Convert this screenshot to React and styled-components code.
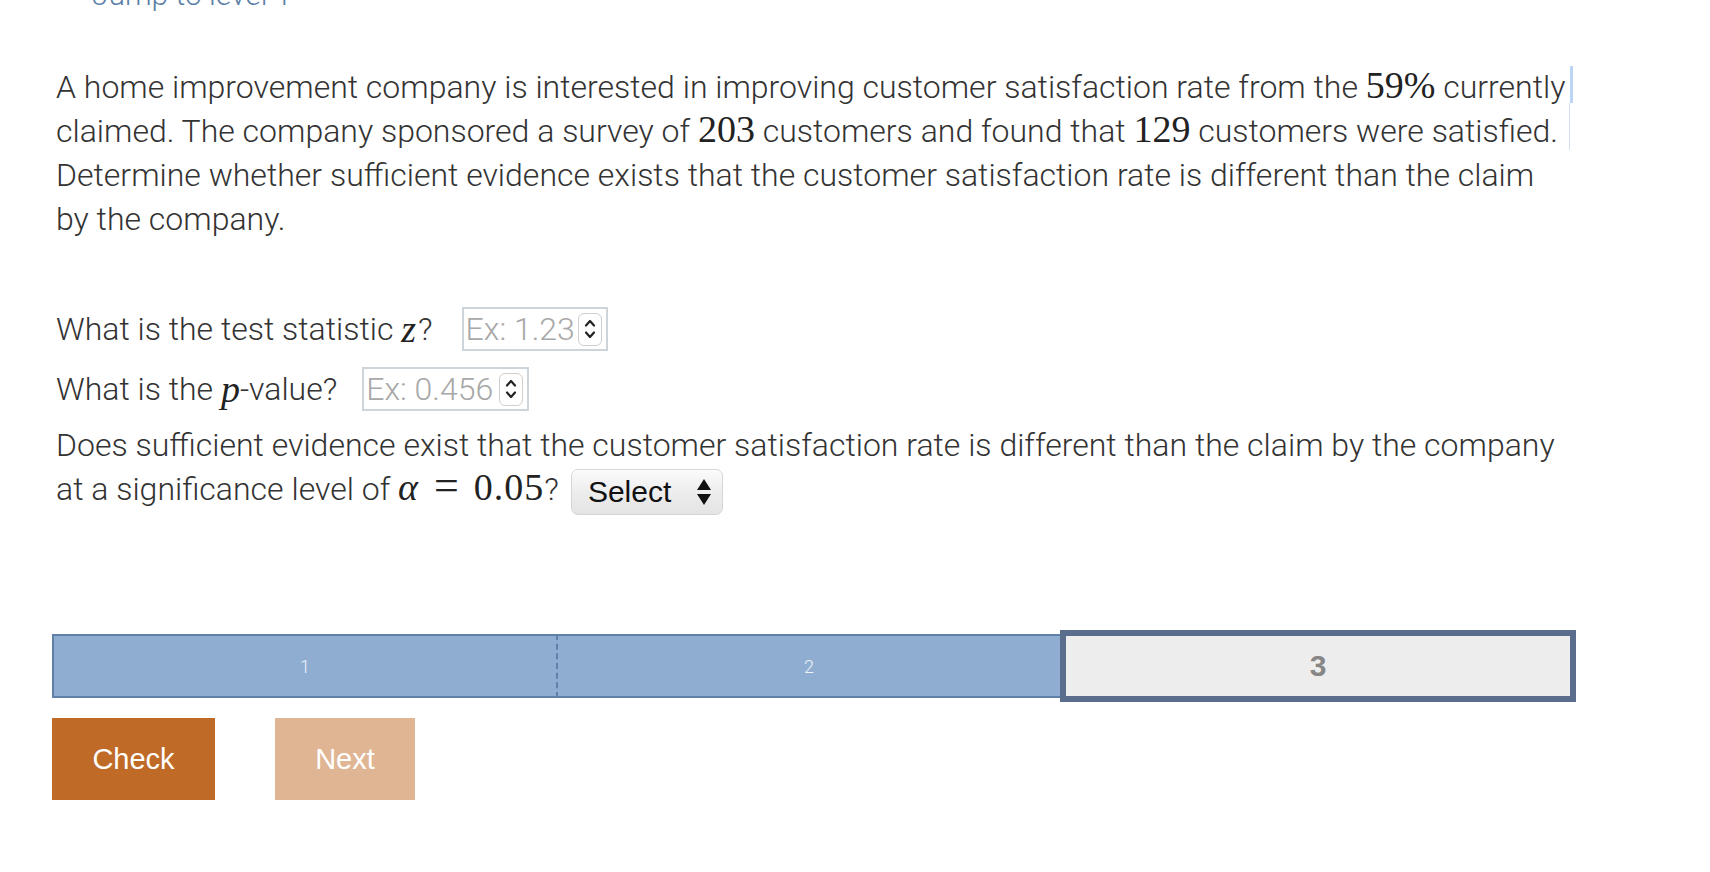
import React from "react";
import styled, { createGlobalStyle } from "styled-components";

const GlobalStyle = createGlobalStyle`
  body {
    margin: 0;
    background: #ffffff;
    font-family: Roboto, "Liberation Sans", sans-serif;
    overflow: hidden;
  }
`;

const Page = styled.div`
  width: 1524px;
  padding-left: 52px;
  color: #333333;
`;

const TopLink = styled.a`
  display: block;
  margin-top: -21px;
  padding-left: 40px;
  height: 32px;
  line-height: 32px;
  font-size: 30px;
  font-weight: 300;
  color: #5b7fa8;
  text-decoration: none;
`;

const Problem = styled.p`
  position: relative;
  margin: 54px 0 0;
  padding-left: 4px;
  font-size: 32px;
  font-weight: 300;
  line-height: 44px;
  white-space: nowrap;

  &::after {
    content: "";
    position: absolute;
    left: 1518px;
    top: 1px;
    width: 3px;
    height: 37px;
    background: #bcd5f5;
  }
  &::before {
    content: "";
    position: absolute;
    left: 1517px;
    top: 38px;
    width: 1px;
    height: 47px;
    background: #cfe0f7;
  }
`;

const Num = styled.span`
  font-family: "Liberation Serif", "DejaVu Serif", serif;
  font-size: ${(p) => p.$size || 38}px;
  letter-spacing: ${(p) => (p.$spaced ? "1px" : "0")};
  font-weight: 400;
  line-height: 0;
  color: #222;
`;

const Var = styled.span`
  font-family: "Liberation Serif", "DejaVu Serif", serif;
  font-style: italic;
  font-size: 38px;
  font-weight: 400;
  line-height: 0;
  color: #222;
  padding-right: ${(p) => (p.$pad ? "2px" : "0")};
`;

const Eq = styled.span`
  margin: 0 15px 0 16px;
`;

const Questions = styled.div`
  margin-top: 66px;
  padding-left: 4px;
  display: flex;
  flex-direction: column;
  gap: 16px;
`;

const Row = styled.div`
  display: flex;
  align-items: center;
  height: 44px;
  font-size: 32px;
  font-weight: 300;
  white-space: nowrap;
`;

const InputBox = styled.div`
  display: flex;
  align-items: center;
  justify-content: space-between;
  box-sizing: border-box;
  width: ${(p) => p.$w}px;
  height: 44px;
  margin-left: ${(p) => p.$gap}px;
  padding: 0 4px 0 2px;
  border: 2px solid #cdd5db;
  color: #a8a8a8;
  font-size: 32px;
  font-weight: 300;
  overflow: hidden;
`;

const Spinner = styled.span`
  display: flex;
  flex-direction: column;
  align-items: center;
  justify-content: center;
  flex: 0 0 24px;
  box-sizing: border-box;
  width: 24px;
  height: 33px;
  border: 1px solid #cfcfcf;
  border-radius: 6px;
  background: #ffffff;
  gap: 4px;
`;

const Question = styled.p`
  margin: 12px 0 0;
  padding-left: 4px;
  font-size: 32px;
  font-weight: 300;
  line-height: 44px;
  white-space: nowrap;
`;

const Select = styled.span`
  display: inline-flex;
  align-items: center;
  justify-content: space-between;
  box-sizing: border-box;
  vertical-align: middle;
  width: 152px;
  height: 46px;
  margin: -4px 0 -4px 12px;
  padding: 0 10px 0 16px;
  border: 1px solid #d6d6d6;
  border-radius: 7px;
  background: linear-gradient(#fbfbfb, #ececec 55%, #e4e4e4);
  box-shadow: inset 0 1px 0 #ffffff;
  font-family: "Liberation Sans", Arial, sans-serif;
  font-size: 30px;
  font-weight: 400;
  line-height: 1;
  color: #111;
`;

const Track = styled.div`
  display: flex;
  height: 64px;
  margin-top: 123px;
`;

const DoneSeg = styled.div`
  flex: 1;
  display: flex;
  align-items: center;
  justify-content: center;
  background: #8fadd0;
  border-top: 2px solid #5f80a8;
  border-bottom: 2px solid #5f80a8;
  border-left: ${(p) => (p.$first ? "2px solid #5f80a8" : "none")};
  border-right: ${(p) => (p.$first ? "2px dashed #5f80a8" : "none")};
  color: #eef3f9;
  font-size: 18px;
  font-weight: 300;
`;

const CurrentSeg = styled.div`
  flex: 0 0 516px;
  box-sizing: border-box;
  margin: -4px 0;
  display: flex;
  align-items: center;
  justify-content: center;
  background: #ededed;
  border: 6px solid #5a6d8c;
  color: #878787;
  font-family: "Liberation Sans", Arial, sans-serif;
  font-size: 30px;
  font-weight: 700;
`;

const Buttons = styled.div`
  display: flex;
  gap: 60px;
  margin-top: 20px;
`;

const Button = styled.button`
  width: ${(p) => p.$w}px;
  height: 82px;
  border: none;
  padding: 0;
  background: ${(p) => (p.$muted ? "#e0b594" : "#c06a27")};
  color: #ffffff;
  font-family: "Liberation Sans", Arial, sans-serif;
  font-size: 29px;
  cursor: pointer;
`;

const Chevron = ({ up }) => (
  <svg width="12" height="8" viewBox="0 0 12 8">
    <path
      d={up ? "M2 6.5 L6 2 L10 6.5" : "M2 1.5 L6 6 L10 1.5"}
      fill="none"
      stroke="#222"
      strokeWidth="2.2"
      strokeLinecap="round"
      strokeLinejoin="round"
    />
  </svg>
);

const SelectArrows = () => (
  <svg width="16" height="28" viewBox="0 0 16 28">
    <path d="M8 1 L15 12 L1 12 Z" fill="#111" />
    <path d="M1 16 L15 16 L8 27 Z" fill="#111" />
  </svg>
);

const NumberInput = ({ placeholder, w, gap }) => (
  <InputBox $w={w} $gap={gap}>
    <span>{placeholder}</span>
    <Spinner>
      <Chevron up />
      <Chevron />
    </Spinner>
  </InputBox>
);

export default function App() {
  return (
    <>
      <GlobalStyle />
      <Page>
        <TopLink href="#">Jump to level 1</TopLink>
        <Problem>
          A home improvement company is interested in improving customer satisfaction rate from the <Num>59%</Num> currently
          <br />
          claimed. The company sponsored a survey of <Num>203</Num> customers and found that <Num>129</Num> customers were satisfied.
          <br />
          Determine whether sufficient evidence exists that the customer satisfaction rate is different than the claim
          <br />
          by the company.
        </Problem>
        <Questions>
          <Row>
            What is the test statistic&nbsp;<Var $pad>z</Var>?
            <NumberInput placeholder="Ex: 1.23" w={146} gap={29} />
          </Row>
          <Row>
            What is the&nbsp;<Var>p</Var>-value?
            <NumberInput placeholder="Ex: 0.456" w={167} gap={25} />
          </Row>
        </Questions>
        <Question>
          Does sufficient evidence exist that the customer satisfaction rate is different than the claim by the company
          <br />
          at a significance level of <Var>α</Var>
          <Eq>
            <Num $size={44}>=</Num>
          </Eq>
          <Num $spaced>0.05</Num>?
          <Select>
            Select
            <SelectArrows />
          </Select>
        </Question>
        <Track>
          <DoneSeg $first>1</DoneSeg>
          <DoneSeg>2</DoneSeg>
          <CurrentSeg>3</CurrentSeg>
        </Track>
        <Buttons>
          <Button $w={163}>Check</Button>
          <Button $w={140} $muted>
            Next
          </Button>
        </Buttons>
      </Page>
    </>
  );
}
